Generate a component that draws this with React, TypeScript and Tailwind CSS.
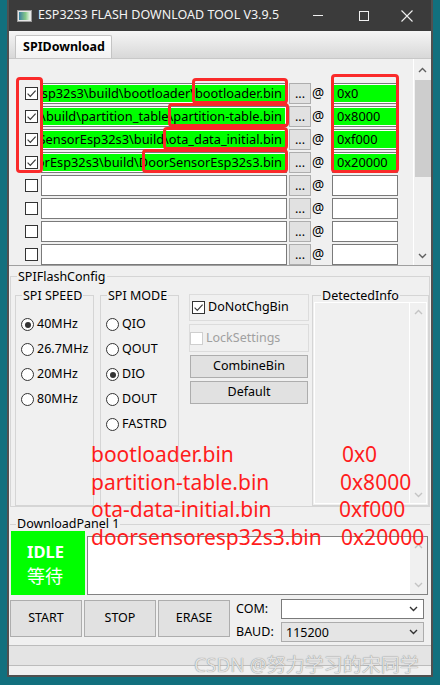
import React from "react";

function Check({ checked, disabled }: { checked?: boolean; disabled?: boolean }) {
  return (
    <div
      className={`w-[13px] h-[13px] shrink-0 border bg-white flex items-center justify-center ${
        disabled ? "border-[#cfcfcf]" : "border-[#333333]"
      }`}
    >
      {checked && (
        <svg width="11" height="11" viewBox="0 0 11 11">
          <path d="M1.6 5.6 L4.3 8.3 L9.6 2.6" fill="none" stroke="#3a3a3a" strokeWidth="1.2" />
        </svg>
      )}
    </div>
  );
}

function Radio({ checked }: { checked?: boolean }) {
  return (
    <div className="w-[13px] h-[13px] shrink-0 rounded-full border border-[#333333] bg-white flex items-center justify-center">
      {checked && <div className="w-[6px] h-[6px] rounded-full bg-[#333333]" />}
    </div>
  );
}

function Chev({ up, color = "#606060" }: { up?: boolean; color?: string }) {
  return (
    <svg width="9" height="6" viewBox="0 0 9 6">
      <polyline
        points={up ? "1,5 4.5,1.5 8,5" : "1,1 4.5,4.5 8,1"}
        fill="none"
        stroke={color}
        strokeWidth="1.4"
      />
    </svg>
  );
}

const rows = [
  { on: true, path: "D:\\esp\\DoorSensorEsp32s3\\build\\bootloader\\bootloader.bin", addr: "0x0" },
  { on: true, path: "D:\\esp\\DoorSensorEsp32s3\\build\\partition_table\\partition-table.bin", addr: "0x8000" },
  { on: true, path: "D:\\esp\\DoorSensorEsp32s3\\build\\ota_data_initial.bin", addr: "0xf000" },
  { on: true, path: "D:\\esp\\DoorSensorEsp32s3\\build\\DoorSensorEsp32s3.bin", addr: "0x20000" },
  { on: false, path: "", addr: "" },
  { on: false, path: "", addr: "" },
  { on: false, path: "", addr: "" },
  { on: false, path: "", addr: "" },
];

const speeds = [
  { t: "40MHz", c: true },
  { t: "26.7MHz", c: false },
  { t: "20MHz", c: false },
  { t: "80MHz", c: false },
];
const modes = [
  { t: "QIO", c: false },
  { t: "QOUT", c: false },
  { t: "DIO", c: true },
  { t: "DOUT", c: false },
  { t: "FASTRD", c: false },
];

export default function App() {
  return (
    <div className="relative w-[440px] h-[685px] overflow-hidden bg-[#12707e] font-['Noto_Sans','Noto_Sans_CJK_SC',sans-serif] text-[12.5px] text-black">
      <div className="ml-[7px] w-[426px] h-[677px] flex flex-col bg-[#f0f0f0] border-x-2 border-b-2 border-[#505050]">
        {/* Title bar */}
        <div className="h-[31px] shrink-0 bg-[#3b3b3b] flex items-center text-[#f4f4f4]">
          <div className="ml-[8px] flex">
            <svg width="15" height="12" viewBox="0 0 15 12">
              <defs>
                <linearGradient id="ig" x1="0" y1="0" x2="1" y2="0">
                  <stop offset="0" stopColor="#3a7fa0" />
                  <stop offset="0.6" stopColor="#86c98a" />
                  <stop offset="1" stopColor="#e8f4e8" />
                </linearGradient>
              </defs>
              <rect x="0.5" y="0.5" width="14" height="11" fill="#e6e6e6" stroke="#9a9a9a" />
              <rect x="2" y="2" width="11" height="8" fill="url(#ig)" />
            </svg>
          </div>
          <span className="ml-[6px] text-[12.5px] leading-none">ESP32S3 FLASH DOWNLOAD TOOL V3.9.5</span>
          <div className="ml-auto flex h-full pr-[4px]">
            <div className="w-[46px] h-full flex items-center justify-center">
              <div className="w-[10px] h-px bg-[#f0f0f0]" />
            </div>
            <div className="w-[45px] h-full flex items-center justify-center">
              <div className="w-[10px] h-[10px] border border-[#f0f0f0]" />
            </div>
            <div className="w-[41px] h-full flex items-center justify-center">
              <svg width="12" height="12" viewBox="0 0 12 12">
                <path d="M0.5 0.5 L11.5 11.5 M11.5 0.5 L0.5 11.5" stroke="#f0f0f0" strokeWidth="1.1" />
              </svg>
            </div>
          </div>
        </div>

        {/* Tab header */}
        <div className="h-[28px] shrink-0 border-b border-[#c8c8c8] bg-linear-to-b from-[#f6f6f6] to-[#d8d8d8] flex items-end pl-[6px]">
          <div className="h-[23px] w-[97px] border border-b-0 border-[#c4c4c4] rounded-t-[2px] bg-linear-to-b from-white to-[#f2f2f2] font-bold pl-[7px] flex items-center">
            SPIDownload
          </div>
        </div>

        {/* File list */}
        <div className="h-[207px] shrink-0 flex border-b border-[#a0a0a0]">
          <div className="flex-1 overflow-hidden pt-[24px]">
            {rows.map((r, i) => (
              <div key={i} className="flex items-center h-[21px] mb-[2px] pl-[16px]">
                <Check checked={r.on} />
                <div className="ml-[3px] w-[246px] h-[21px] shrink-0 border border-[#7a7a7a] bg-white p-px overflow-hidden">
                  <div
                    className={`h-full flex justify-end items-center pr-[3px] overflow-hidden text-[12.8px] ${
                      r.on ? "bg-[#00ff00]" : "bg-white"
                    }`}
                  >
                    <span className="whitespace-nowrap shrink-0">{r.path}</span>
                  </div>
                </div>
                <div className="ml-[2px] w-[22px] h-[21px] shrink-0 bg-[#e1e1e1] border border-[#adadad] flex items-center justify-center pt-[2px]">
                  ...
                </div>
                <span className="ml-[1px] w-[20px] shrink-0 text-[13.5px]">@</span>
                <div className="w-[66px] h-[21px] shrink-0 border border-[#7a7a7a] bg-white p-px">
                  <div className={`h-full flex items-center pl-[3px] text-[12.8px] ${r.on ? "bg-[#00ff00]" : "bg-white"}`}>
                    {r.addr}
                  </div>
                </div>
              </div>
            ))}
          </div>
          <div className="w-[18px] shrink-0 border-l border-white flex flex-col items-center">
            <div className="h-[21px] flex items-center justify-center">
              <Chev up />
            </div>
            <div className="w-[16px] h-[97px] bg-[#cdcdcd]" />
            <div className="flex-1" />
            <div className="h-[18px] flex items-center justify-center">
              <Chev />
            </div>
          </div>
        </div>

        {/* SPIFlashConfig */}
        <fieldset className="mt-[2px] mx-[1px] h-[239px] shrink-0 min-w-0 p-0 border border-[#d5d5d5]">
          <legend className="ml-[6px] px-[1px] leading-[17px]">SPIFlashConfig</legend>
          <div className="mt-[4px] flex h-[217px]">
            <fieldset className="ml-[4px] w-[79px] h-[217px] min-w-0 p-0 border border-[#d5d5d5]">
              <legend className="ml-[6px] px-[1px] leading-[13px]">SPI SPEED</legend>
              <div className="pt-[10px] flex flex-col">
                {speeds.map((s) => (
                  <div key={s.t} className="h-[25px] flex items-center pl-[5px] gap-[3px]">
                    <Radio checked={s.c} />
                    <span>{s.t}</span>
                  </div>
                ))}
              </div>
            </fieldset>
            <fieldset className="ml-[6px] w-[79px] h-[217px] min-w-0 p-0 border border-[#d5d5d5]">
              <legend className="ml-[6px] px-[1px] leading-[13px]">SPI MODE</legend>
              <div className="pt-[10px] flex flex-col">
                {modes.map((s) => (
                  <div key={s.t} className="h-[25px] flex items-center pl-[5px] gap-[3px]">
                    <Radio checked={s.c} />
                    <span>{s.t}</span>
                  </div>
                ))}
              </div>
            </fieldset>
            <div className="ml-[10px] w-[120px] flex flex-col">
              <div className="mt-[5px] h-[27px] border border-[#dcdcdc] flex items-center pl-[2px] gap-[3px]">
                <Check checked />
                <span>DoNotChgBin</span>
              </div>
              <div className="mt-[3px] h-[28px] border border-[#dcdcdc] flex items-center gap-[3px]">
                <Check disabled />
                <span className="text-[#a0a0a0]">LockSettings</span>
              </div>
              <div className="mt-[3px] ml-[1px] w-[118px] h-[23px] bg-[#e1e1e1] border border-[#adadad] flex items-center justify-center">
                CombineBin
              </div>
              <div className="mt-[3px] ml-[1px] w-[118px] h-[23px] bg-[#e1e1e1] border border-[#adadad] flex items-center justify-center">
                Default
              </div>
            </div>
            <fieldset className="ml-[3px] w-[117px] h-[217px] min-w-0 p-0 border border-[#d5d5d5] flex flex-col">
              <legend className="ml-[8px] px-[1px] leading-[13px]">DetectedInfo</legend>
              <div className="mx-[1px] h-[202px] border border-white flex">
                <div className="flex-1" />
                <div className="w-[17px] border-l border-white flex flex-col items-center">
                  <div className="h-[18px] flex items-center justify-center">
                    <Chev up color="#c4c4c4" />
                  </div>
                  <div className="flex-1" />
                  <div className="h-[17px] flex items-center justify-center">
                    <Chev color="#c4c4c4" />
                  </div>
                </div>
              </div>
            </fieldset>
          </div>
        </fieldset>

        {/* Download panel */}
        <fieldset className="mt-[10px] mx-[1px] shrink-0 min-w-0 p-0 border-0 border-t border-[#d5d5d5]">
          <legend className="ml-[6px] px-[1px] leading-[14px]">DownloadPanel 1</legend>
          <div className="flex">
            <div className="ml-[1px] w-[74px] h-[64px] bg-[#00ff00] flex flex-col pl-[16px] pt-[11px] text-white">
              <span className="font-bold text-[16.5px] leading-[19px]">IDLE</span>
              <span className="mt-[3px] text-[18px] leading-[22px] font-['Noto_Sans_CJK_SC',sans-serif]">等待</span>
            </div>
            <div className="ml-[2px] mt-[5px] w-[341px] h-[59px] bg-white border border-[#828282] flex">
              <div className="flex-1" />
              <div className="w-[17px] bg-[#f0f0f0] flex flex-col items-center">
                <div className="h-[18px] flex items-center justify-center">
                  <Chev up color="#c4c4c4" />
                </div>
                <div className="flex-1" />
                <div className="h-[18px] flex items-center justify-center">
                  <Chev color="#c4c4c4" />
                </div>
              </div>
            </div>
          </div>
          <div className="mt-[5px] flex h-[37px]">
            <div className="w-[72px] h-[37px] bg-[#e1e1e1] border border-[#adadad] flex items-center justify-center">
              START
            </div>
            <div className="ml-[2px] w-[72px] h-[37px] bg-[#e1e1e1] border border-[#adadad] flex items-center justify-center">
              STOP
            </div>
            <div className="ml-[2px] w-[72px] h-[37px] bg-[#e1e1e1] border border-[#adadad] flex items-center justify-center">
              ERASE
            </div>
            <div className="ml-[6px] -mt-[1px] flex flex-col gap-[3px]">
              <div className="h-[20px] flex items-center">
                <span className="w-[45px]">COM:</span>
                <div className="w-[143px] h-[20px] bg-white border border-[#7a7a7a] flex items-center justify-end pr-[5px]">
                  <Chev color="#333333" />
                </div>
              </div>
              <div className="h-[20px] flex items-center">
                <span className="w-[45px]">BAUD:</span>
                <div className="w-[143px] h-[20px] bg-[#e5e5e5] border border-[#acacac] flex items-center justify-between pl-[4px] pr-[5px]">
                  <span className="pt-[3px]">115200</span>
                  <Chev color="#333333" />
                </div>
              </div>
            </div>
          </div>
        </fieldset>

        {/* Status bar */}
        <div className="mt-[8px] h-[21px] shrink-0 border-y border-[#bcbcbc] bg-[#e4e4e4]" />
        <div className="flex-1" />
      </div>

      {/* Red annotation boxes */}
      <div className="absolute left-[16px] top-[77px] w-[27px] h-[96px] border-[3px] border-[#fa2a2a] rounded-[4px]" />
      <div className="absolute left-[192px] top-[78px] w-[96px] h-[26px] border-[3px] border-[#fa2a2a] rounded-[4px]" />
      <div className="absolute left-[168px] top-[103px] w-[121px] h-[24px] border-[3px] border-[#fa2a2a] rounded-[4px]" />
      <div className="absolute left-[163px] top-[127px] w-[125px] h-[23px] border-[3px] border-[#fa2a2a] rounded-[4px]" />
      <div className="absolute left-[142px] top-[149px] w-[146px] h-[24px] border-[3px] border-[#fa2a2a] rounded-[4px]" />
      <div className="absolute left-[331px] top-[74px] w-[68px] h-[99px] border-[3px] border-[#fa2a2a] rounded-[4px]" />

      {/* Red annotation text */}
      <div className="absolute left-[91px] top-[441px] text-[21px] leading-[27.67px] text-[#ff1c1c] font-['Noto_Sans',sans-serif]">
        <div className="flex">
          <span className="w-[249px]">bootloader.bin</span>
          <span className="pl-[2px]">0x0</span>
        </div>
        <div className="flex">
          <span className="w-[249px]">partition-table.bin</span>
          <span>0x8000</span>
        </div>
        <div className="flex">
          <span className="w-[249px]">ota-data-initial.bin</span>
          <span className="-ml-[1px]">0xf000</span>
        </div>
        <div className="flex">
          <span className="w-[249px]">doorsensoresp32s3.bin</span>
          <span className="pl-[1px]">0x20000</span>
        </div>
      </div>

      {/* Watermark */}
      <div className="absolute left-[194px] top-[656px] text-[19px] leading-[19px] text-[#e2e2e2] [text-shadow:0_0_1px_#6f6f6f] whitespace-nowrap">
        CSDN @努力学习的宋同学
      </div>
    </div>
  );
}
